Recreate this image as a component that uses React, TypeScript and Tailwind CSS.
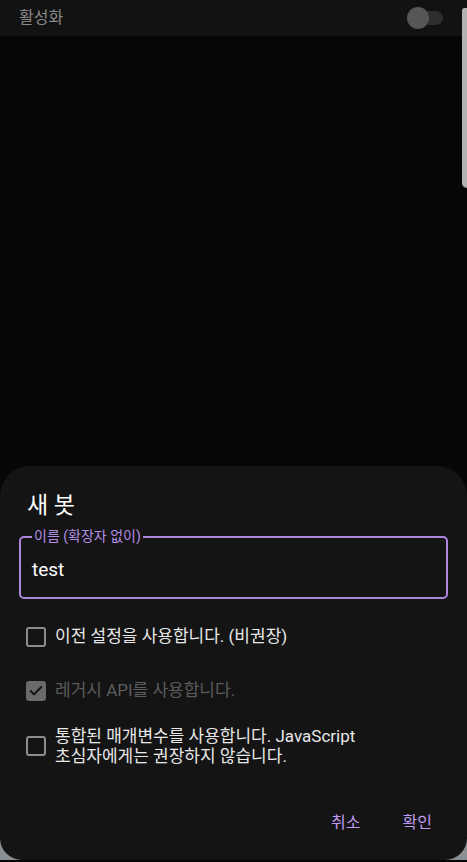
import { Check } from 'lucide-react';

const font = { fontFamily: "Roboto, 'Noto Sans CJK KR', sans-serif" };

function Box({ checked, disabled }: { checked?: boolean; disabled?: boolean }) {
  if (checked) {
    return (
      <div className="w-5 h-5 shrink-0 rounded-[3px] bg-[#6a6a6a] flex items-center justify-center">
        <Check className="w-4 h-4 text-[#141414]" strokeWidth={3} />
      </div>
    );
  }
  return <div className={`w-5 h-5 shrink-0 rounded-[3px] border-2 ${disabled ? 'border-[#555]' : 'border-[#8c8c8c]'}`} />;
}

export default function App() {
  return (
    <div className="relative w-[467px] h-[862px] bg-[#060606] overflow-hidden" style={font}>
      {/* Top setting row */}
      <div className="h-9 bg-[#121212] flex items-center justify-between pl-[19px] pr-6">
        <span className="text-[16px] text-[#8a8a8a]">활성화</span>
        <div className="relative w-9 h-[22px] flex items-center">
          <div className="absolute left-2 right-0 h-[14px] rounded-full bg-[#2e2e2e]" />
          <div className="relative w-[22px] h-[22px] rounded-full bg-[#565656]" />
        </div>
      </div>

      {/* scrollbar */}
      <div className="absolute right-0 top-[8px] w-[5px] h-[180px] rounded-l-[3px] rounded-bl-[6px] bg-[#b2b2b2]" />

      {/* grey strip behind the bottom corners */}
      <div className="absolute left-0 right-0 bottom-[2px] h-[30px] bg-[#8a8f93]" />

      {/* Dialog */}
      <div className="absolute left-0 right-0 top-[466px] h-[394px] bg-[#141414] rounded-t-[30px] rounded-b-[22px] pt-[25px]">
        <h2 className="pl-[27px] text-[23px] leading-[30px] text-white">새 봇</h2>

        <fieldset className="mx-[19px] mt-[8px] h-[70px] border-2 border-[#ad86df] rounded-[5px] pl-[11px] pr-3">
          <legend className="px-[2px] text-[14px] leading-[15px] text-[#b48de4]">이름 (확장자 없이)</legend>
          <div className="pt-[14px] text-[19px] leading-6 text-white">test</div>
        </fieldset>

        <div className="mt-[28px] pl-[26px] pr-6 flex flex-col">
          <div className="flex items-center gap-[9px] h-5">
            <Box />
            <span className="text-[17px] text-[#e8e8e8]">이전 설정을 사용합니다. (비권장)</span>
          </div>
          <div className="flex items-center gap-[9px] h-5 mt-[34px]">
            <Box checked disabled />
            <span className="text-[17px] text-[#5c5c5c]">레거시 API를 사용합니다.</span>
          </div>
          <div className="flex items-center gap-[9px] mt-[25px]">
            <Box />
            <span className="text-[17px] leading-[20px] text-[#e8e8e8]">
              통합된 매개변수를 사용합니다. JavaScript
              <br />
              초심자에게는 권장하지 않습니다.
            </span>
          </div>
        </div>

        <div className="absolute right-[35px] bottom-[25px] flex gap-[42px] text-[16px] text-[#c09af0]">
          <span>취소</span>
          <span>확인</span>
        </div>
      </div>
    </div>
  );
}
